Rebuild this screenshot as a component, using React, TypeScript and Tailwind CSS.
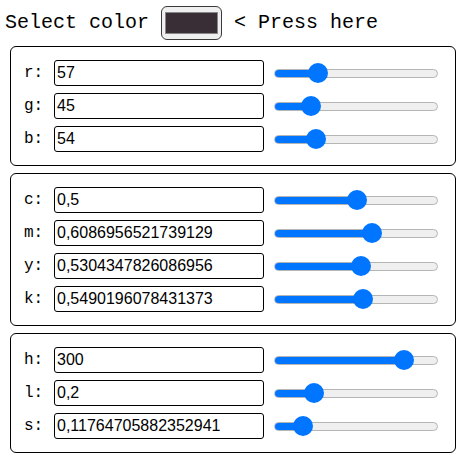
import React from 'react';

type Row = { label: string; value: string; frac: number };

const rgbRows: Row[] = [
  { label: 'r', value: '57', frac: 57 / 255 },
  { label: 'g', value: '45', frac: 45 / 255 },
  { label: 'b', value: '54', frac: 54 / 255 },
];

const cmykRows: Row[] = [
  { label: 'c', value: '0,5', frac: 0.5 },
  { label: 'm', value: '0,6086956521739129', frac: 0.6086956521739129 },
  { label: 'y', value: '0,5304347826086956', frac: 0.5304347826086956 },
  { label: 'k', value: '0,5490196078431373', frac: 0.5490196078431373 },
];

const hlsRows: Row[] = [
  { label: 'h', value: '300', frac: 300 / 360 },
  { label: 'l', value: '0,2', frac: 0.2 },
  { label: 's', value: '0,11764705882352941', frac: 0.11764705882352941 },
];

const mono = "font-['Liberation_Mono','Courier_New',monospace]";

function Slider({ frac }: { frac: number }) {
  // thumb centre position along the 164px track
  const pos = 12 + frac * 141;
  return (
    <div className="relative w-[164px] h-[26px] flex items-center">
      <div className="w-full h-[9px] rounded-full bg-[#efefef] border border-[#b5b5b5] overflow-hidden">
        <div className="h-full bg-[#0075ff]" style={{ width: pos }} />
      </div>
      <div
        className="absolute top-[3px] w-[20px] h-[20px] rounded-full bg-[#0075ff]"
        style={{ left: pos - 10 }}
      />
    </div>
  );
}

function Panel({ rows }: { rows: Row[] }) {
  return (
    <div className="w-[446px] ml-[10px] border border-black rounded-[6px] pt-[13px] pb-[13px] pl-[13px] flex flex-col gap-[7px]">
      {rows.map((r) => (
        <div key={r.label} className="flex items-center h-[26px]">
          <span className={`${mono} text-[16px] w-[30px] text-black leading-none`}>{r.label}:</span>
          <div className="w-[210px] h-[26px] border border-black rounded-[3px] px-[2px] flex items-center font-['Liberation_Sans',Arial,sans-serif] text-[16px] text-black overflow-hidden whitespace-nowrap">
            {r.value}
          </div>
          <div className="ml-[10px]">
            <Slider frac={r.frac} />
          </div>
        </div>
      ))}
    </div>
  );
}

export default function App() {
  return (
    <div className="w-[474px] h-[469px] bg-white text-black">
      <div className={`${mono} text-[20px] h-[46px] pl-[5px] flex items-center whitespace-pre`}>
        <span>Select color </span>
        <div className="w-[61px] h-[34px] border border-[#3a3a3a] rounded-[6px] bg-[#efefef] px-[3px] py-[5px]">
          <div className="w-full h-full bg-[#392d36] border border-[#888888]" />
        </div>
        <span> &lt; Press here</span>
      </div>
      <div className="flex flex-col gap-[7px]">
        <Panel rows={rgbRows} />
        <Panel rows={cmykRows} />
        <Panel rows={hlsRows} />
      </div>
    </div>
  );
}
